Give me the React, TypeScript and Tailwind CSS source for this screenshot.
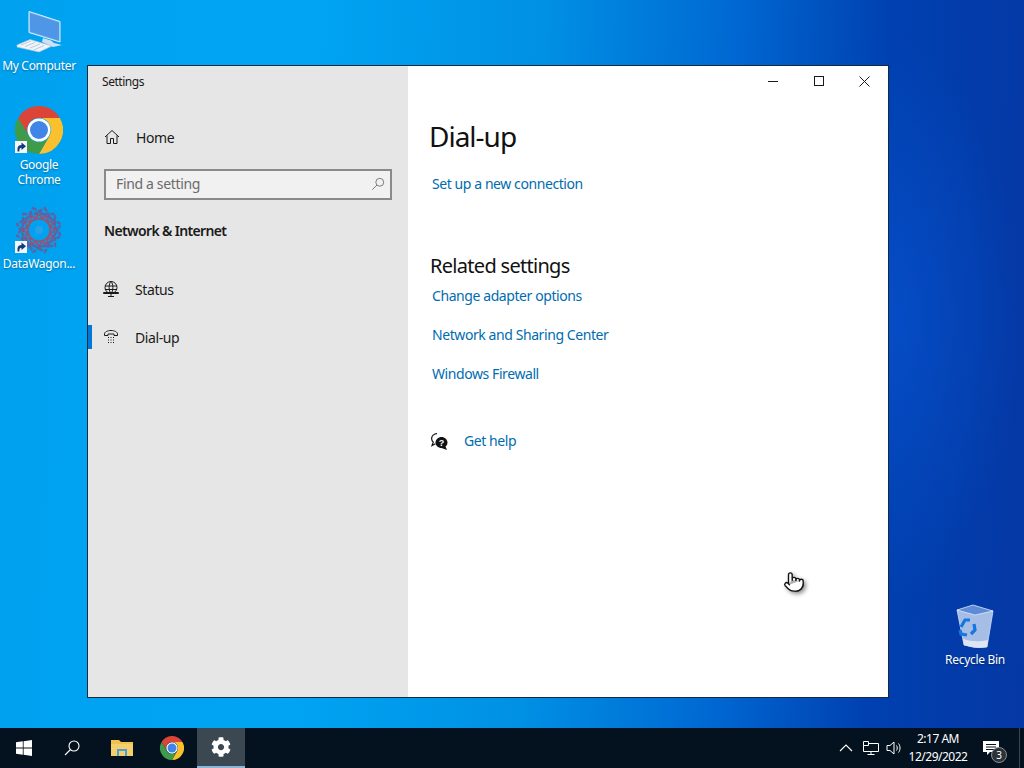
import { Pointer } from 'lucide-react';
import { FaCog } from 'react-icons/fa';

const font = 'font-["Noto_Sans","Open_Sans",sans-serif]';

const ChromeLogo = ({ className }: { className: string }) => (
  <svg viewBox="0 0 48 48" className={className}>
    <path fill="#db4437" d="M3.2 12A24 24 0 0 1 44.8 12H24A12 12 0 0 0 13.6 30Z" />
    <path fill="#fbc02d" d="M44.8 12A24 24 0 0 1 24 48L34.4 30A12 12 0 0 0 24 12Z" />
    <path fill="#3e9b4a" d="M24 48A24 24 0 0 1 3.2 12L13.6 30A12 12 0 0 0 34.4 30Z" />
    <circle cx="24" cy="24" r="11.5" fill="#fff" />
    <circle cx="24" cy="24" r="9" fill="#4285e8" />
  </svg>
);

const ShortcutArrow = ({ className }: { className: string }) => (
  <svg viewBox="0 0 12 12" className={className}>
    <rect width="12" height="12" fill="#f4f6fa" />
    <path d="M2.500 10.500V7.500C2.500 5 4.500 4 6.500 4V1.500L11 5.300 6.500 9V6.800C5 6.800 4.300 7.800 4.300 10.500Z" fill="#123a7a" />
  </svg>
);

const ComputerIcon = () => (
  <svg viewBox="0 0 48 44" className="h-[44px] w-[48px]">
    <path d="M13 .5 44 10.500V31L13 21.500Z" fill="#6fb4ee" stroke="#dbeeff" strokeWidth="1" />
    <path d="M14 2 43 11.500V29.500L14 20.500Z" fill="#4f97e6" />
    <path d="M27 27 35 29.500 38 32 46 34 37 36 26 31Z" fill="#cfe0ee" />
    <path d="M1 34 14 28.500 36 35 23 41 1 36Z" fill="#eef4fa" stroke="#b4c6d6" strokeWidth="0.6" />
    <path d="M5 34 15 30M9 35.500 19 31.500M14 37 24 33M18 39 28 34.500" stroke="#aebfce" strokeWidth="0.8" />
  </svg>
);

const DataWagonIcon = () => (
  <svg viewBox="0 0 48 48" className="h-[48px] w-[48px]">
    <g fill="none" stroke="#7c4f88" strokeWidth="2.400" strokeDasharray="4 1.500" opacity="0.75">
      {[0, 30, 60].map((angle) => (
        <rect key={angle} x="8" y="8" width="32" height="32" transform={`rotate(${angle} 24 24)`} />
      ))}
    </g>
    <g fill="none" stroke="#b1455f" strokeWidth="1.600" opacity="0.8">
      {[15, 45, 75].map((angle) => (
        <rect key={angle} x="13" y="13" width="22" height="22" transform={`rotate(${angle} 24 24)`} />
      ))}
    </g>
    <circle cx="24" cy="24" r="4" fill="#2aa0e8" />
  </svg>
);

const RecycleBinIcon = () => (
  <svg viewBox="0 0 40 46" className="h-[46px] w-[40px]">
    <path d="M2 7 9 42Q20 46 32 44L38 8Z" fill="#a6bde6" stroke="#cfe0f8" strokeWidth="0.800" />
    <path d="M2 7 18 2 38 8 20 12Z" fill="#5f8ad6" stroke="#dbe8fb" strokeWidth="0.800" />
    <path d="M8 36Q20 40 33 37L32 44Q20 46 9 42Z" fill="#dde6f2" />
    <g fill="none" stroke="#1676e0" strokeWidth="3.200">
      <path d="M6 24 10 17 15 17" />
      <path d="M19 21 20 27 16 31" />
      <path d="M12 32 6 31 5 27" />
    </g>
  </svg>
);

const DesktopIcon = ({ label, className, children }: { label: string; className: string; children: React.ReactNode }) => (
  <div className={`absolute flex w-[76px] flex-col items-center text-center text-[12px] leading-[15px] tracking-[-0.3px] text-white ${className}`}>
    {children}
    <span className="[text-shadow:0_1px_2px_rgba(0,0,0,0.35)]">{label}</span>
  </div>
);

const HomeIcon = () => (
  <svg viewBox="0 0 16 16" className="h-[16px] w-[16px]" fill="none" stroke="#1a1a1a" strokeWidth="1">
    <path d="M1 8 8 1.500 15 8M3 6.500V14.500H6.500V9.500H9.500V14.500H13V6.500" />
  </svg>
);

const StatusIcon = () => (
  <svg viewBox="0 0 16 16" className="h-[16px] w-[16px]" fill="none" stroke="#1a1a1a" strokeWidth="1">
    <circle cx="8" cy="6.500" r="6" />
    <path d="M8 .5C5.500 3 5.500 10 8 12.500 10.500 10 10.500 3 8 .5ZM2 5H14M2 8.500H14M.5 11.500H15.500V12.500H.5ZM8 12.500V15M5 15.500H11" />
  </svg>
);

const DialUpIcon = () => (
  <svg viewBox="0 0 16 16" className="h-[16px] w-[16px]" fill="none" stroke="#1a1a1a" strokeWidth="1">
    <path d="M1.500 6.500V5C1.500 3 4.500 1.500 8 1.500S14.500 3 14.500 5V6.500H11V5H5V6.500Z" />
    <path d="M5 8.500H6M7.500 8.500H8.500M10 8.500H11M5 11H6M7.500 11H8.500M10 11H11M5 13.500H6M7.500 13.500H8.500M10 13.500H11" />
  </svg>
);

const HelpIcon = () => (
  <svg viewBox="0 0 17 17" className="h-[17px] w-[17px]">
    <path d="M6 .7C3 .7.6 2.800.6 5.500c0 1.500.7 2.700 1.700 3.600L1 12.500l3.500-1.800" fill="none" stroke="#111" strokeWidth="1.200" />
    <path d="M10.500 4C7.200 4 4.500 6.500 4.500 9.500s2.700 5.500 6 5.500l5.500 2-1.500-3.500c1.300-1 2-2.500 2-4C16.500 6.500 13.800 4 10.500 4Z" fill="#111" />
    <text x="10.500" y="12.700" textAnchor="middle" fontSize="9" fontWeight="700" fill="#fff" fontFamily="Liberation Sans">?</text>
  </svg>
);

const SidebarItem = ({ label, icon, active }: { label: string; icon: React.ReactNode; active?: boolean }) => (
  <div className="relative flex h-[48px] items-center pl-[15px] text-[14px] tracking-[-0.4px] text-[#1a1a1a]">
    {active && <div className="absolute top-[12px] left-0 h-[24px] w-[4px] bg-[#0078d7]" />}
    <span className="flex w-[32px] shrink-0">{icon}</span>
    {label}
  </div>
);

const LinkText = ({ children }: { children: React.ReactNode }) => (
  <span className="block text-[14px] leading-[20px] tracking-[-0.42px] text-[#006cb0]">{children}</span>
);

const SettingsWindow = () => (
  <div className="absolute top-[65px] left-[87px] flex h-[633px] w-[802px] border border-[#15293f]">
    <aside className="flex w-[320px] shrink-0 flex-col bg-[#e6e6e6]">
      <div className="h-[32px] pt-[7px] pl-[14px] text-[12px] leading-[18px] tracking-[-0.45px] text-[#1a1a1a]">Settings</div>
      <div className="pt-[15px] pl-[1px]">
        <SidebarItem label="Home" icon={<HomeIcon />} />
      </div>
      <div className="mx-[16px] mt-[8px] flex h-[31px] items-center justify-between border-2 border-[#8a8a8a] bg-[#f1f1f1] pr-[5px] pb-[2px] pl-[10px] text-[14px] tracking-[-0.35px] text-[#6b6b6b]">
        Find a setting
        <svg viewBox="0 0 16 16" className="h-[14px] w-[14px]" fill="none" stroke="#6b6b6b" strokeWidth="1">
          <circle cx="10" cy="6" r="4.500" />
          <path d="M6.800 9.200 1.500 14.500" />
        </svg>
      </div>
      <div className="mt-[20px] pl-[16px] text-[14px] leading-[22px] font-semibold tracking-[-0.65px] text-[#1a1a1a]">Network &amp; Internet</div>
      <div className="mt-[23px]">
        <SidebarItem label="Status" icon={<StatusIcon />} />
        <SidebarItem label="Dial-up" icon={<DialUpIcon />} active />
      </div>
    </aside>
    <main className="relative flex-1 bg-white">
      <div className="absolute top-0 right-0 flex h-[30px] text-[#1a1a1a]">
        <span className="flex w-[46px] items-center justify-center">
          <span className="h-px w-[10px] bg-[#1a1a1a]" />
        </span>
        <span className="flex w-[46px] items-center justify-center">
          <span className="h-[10px] w-[10px] border border-[#1a1a1a]" />
        </span>
        <span className="flex w-[46px] items-center justify-center pr-[2px]">
          <svg viewBox="0 0 11 11" className="h-[11px] w-[11px]" stroke="#1a1a1a" strokeWidth="1">
            <path d="M.5.500 10.500 10.500M10.500.500.500 10.500" />
          </svg>
        </span>
      </div>
      <div className="pt-[50px] pl-[22px]">
        <h1 className="-ml-px text-[28px] leading-[40px] font-normal tracking-[-1px] text-[#111]">Dial-up</h1>
        <div className="mt-[18px] pl-[2px]">
          <LinkText>Set up a new connection</LinkText>
        </div>
        <h2 className="mt-[58px] text-[20px] leading-[28px] font-normal tracking-[-0.7px] text-[#111]">Related settings</h2>
        <div className="mt-[6px] flex flex-col gap-[19px] pl-[2px]">
          <LinkText>Change adapter options</LinkText>
          <LinkText>Network and Sharing Center</LinkText>
          <LinkText>Windows Firewall</LinkText>
        </div>
        <div className="mt-[47px] flex items-center">
          <span className="flex w-[34px] shrink-0 pl-[1px]">
            <HelpIcon />
          </span>
          <LinkText>Get help</LinkText>
        </div>
      </div>
      <Pointer className="absolute top-[504px] left-[375px] h-[24px] w-[22px] fill-white text-[#111] drop-shadow-[2px_2px_2px_rgba(0,0,0,0.45)]" strokeWidth={1.500} />
    </main>
  </div>
);

const TaskSlot = ({ children, className = 'w-[48px]' }: { children: React.ReactNode; className?: string }) => (
  <div className={`flex h-full items-center justify-center ${className}`}>{children}</div>
);

const Taskbar = () => (
  <div className="absolute inset-x-0 bottom-0 flex h-[40px] items-center bg-[#04121f] text-white">
    <TaskSlot>
      <svg viewBox="0 0 16 16" className="h-[16px] w-[16px]" fill="#fff">
        <path d="M0 2.300 6.800 1.300V7.600H0ZM7.600 1.200 16 0V7.600H7.600ZM0 8.400H6.800V14.700L0 13.700ZM7.600 8.400H16V16L7.600 14.800Z" />
      </svg>
    </TaskSlot>
    <TaskSlot>
      <svg viewBox="0 0 16 16" className="h-[16px] w-[16px]" fill="none" stroke="#fff" strokeWidth="1.100">
        <circle cx="10" cy="6" r="5" />
        <path d="M6.500 9.500 1 15" />
      </svg>
    </TaskSlot>
    <TaskSlot className="ml-px w-[50px]">
      <svg viewBox="0 0 22 18" className="h-[18px] w-[22px]">
        <path d="M0 1H8L10 3H22V17H0Z" fill="#f2c14e" />
        <path d="M0 5H22V17H0Z" fill="#f5cf6b" />
        <path d="M6 17V10H16V17H14V12H8V17Z" fill="#4a9fd8" />
      </svg>
    </TaskSlot>
    <TaskSlot className="w-[50px]">
      <ChromeLogo className="h-[24px] w-[24px]" />
    </TaskSlot>
    <TaskSlot className="w-[48px] border-b-2 border-[#8ab4d8] bg-[#3b4852]">
      <FaCog className="h-[20px] w-[20px] text-white" />
    </TaskSlot>
    <div className="ml-auto flex h-full items-center">
      <svg viewBox="0 0 14 8" className="h-[8px] w-[14px]" fill="none" stroke="#fff" strokeWidth="1.100">
        <path d="M1 7 7 1 13 7" />
      </svg>
      <svg viewBox="0 0 16 16" className="ml-[10px] h-[16px] w-[16px]" fill="none" stroke="#fff" strokeWidth="1">
        <path d="M.5 1.500H5.500V5.500H.5ZM5.500 3.500H15.500V11.500H.5V5.500M8 11.500V14.500M4.500 14.500H11.500" />
      </svg>
      <svg viewBox="0 0 16 16" className="ml-[7px] h-[16px] w-[16px]" fill="none" stroke="#fff" strokeWidth="1">
        <path d="M1 5.500H4L8 2V14L4 10.500H1ZM10.500 5.500C11.500 7 11.500 9 10.500 10.500M12.500 3.500C14.500 6 14.500 10 12.500 12.500" />
      </svg>
      <div className="ml-[2px] w-[68px] text-center text-[12px] leading-[18px] tracking-[-0.5px]">
        <div>2:17 AM</div>
        <div>12/29/2022</div>
      </div>
      <div className="relative flex h-full w-[47px] items-center pl-[11px]">
        <svg viewBox="0 0 16 16" className="h-[16px] w-[16px]" fill="#fff">
          <path d="M0 1H16V12H7L4 15V12H0ZM3 4V5H13V4ZM3 6.500V7.500H13V6.500ZM3 9V10H13V9Z" fillRule="evenodd" />
        </svg>
        <span className="absolute top-[19px] left-[19px] flex h-[16px] w-[16px] items-center justify-center rounded-full border border-[#8a8f94] bg-[#2b3238] text-[10px] leading-none">3</span>
      </div>
      <div className="h-full w-[5px] border-l border-[#3a4650]" />
    </div>
  </div>
);

export default function App() {
  return (
    <div className={`relative h-[768px] w-[1024px] overflow-hidden bg-[radial-gradient(ellipse_130px_280px_at_890px_320px,rgba(10,90,220,0.5),transparent),linear-gradient(92deg,#00a2f0_0%,#00a4f2_30%,#0090e4_52%,#0068d2_70%,#0040b0_85%,#0538a4_100%)] ${font}`}>
      <DesktopIcon label="My Computer" className="top-[11px] left-[1px] whitespace-nowrap">
        <div className="mb-[3px] flex w-full justify-center pl-[2px]">
          <ComputerIcon />
        </div>
      </DesktopIcon>
      <DesktopIcon label="Google Chrome" className="top-[106px] left-[1px]">
        <div className="relative mb-[3px] h-[48px] w-[48px]">
          <ChromeLogo className="h-[48px] w-[48px]" />
          <ShortcutArrow className="absolute top-[35px] left-0 h-[12px] w-[12px]" />
        </div>
      </DesktopIcon>
      <DesktopIcon label="DataWagon..." className="top-[206px] left-[1px]">
        <div className="relative mb-[2px] h-[48px] w-[48px]">
          <DataWagonIcon />
          <ShortcutArrow className="absolute top-[35px] left-0 h-[12px] w-[12px]" />
        </div>
      </DesktopIcon>
      <DesktopIcon label="Recycle Bin" className="top-[603px] left-[937px]">
        <div className="mb-[3px]">
          <RecycleBinIcon />
        </div>
      </DesktopIcon>
      <SettingsWindow />
      <Taskbar />
    </div>
  );
}
